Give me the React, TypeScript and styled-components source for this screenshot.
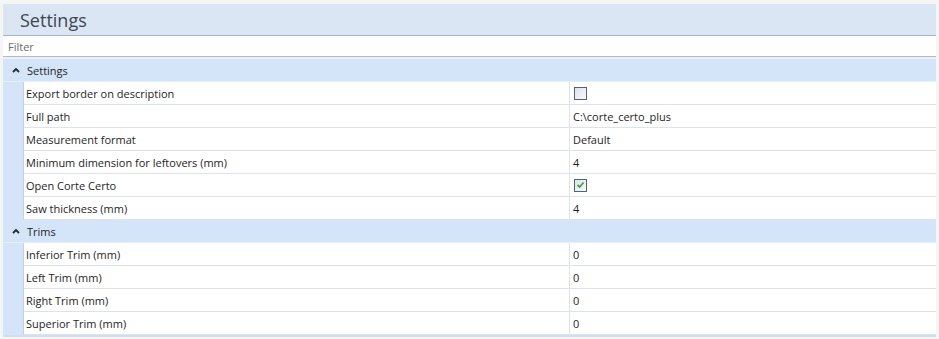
import { createGlobalStyle, styled } from 'styled-components';

const GlobalStyle = createGlobalStyle`
  body {
    margin: 0;
    background: #f5f5f3;
    font-family: "Open Sans", "Noto Sans", "DejaVu Sans", sans-serif;
  }
`;

const Panel = styled.section`
  width: 933px;
  margin: 4px 0 0 3px;
  display: flex;
  flex-direction: column;
  background: #ffffff;
`;

const TitleBar = styled.header`
  height: 31px;
  display: flex;
  align-items: center;
  padding-left: 17px;
  background: #dbe6f4;
  border-bottom: 1px solid #a4b5c7;
  font-size: 18px;
  color: #3e4650;
`;

const FilterInput = styled.input`
  height: 20px;
  border: none;
  border-bottom: 1px solid #b2bac9;
  padding: 0 0 0 5px;
  margin: 0;
  font-family: inherit;
  font-size: 11px;
  color: #333;
  background: #fdfefd;
  outline: none;
  &::placeholder {
    color: #6d6d6d;
  }
`;

const Spacer = styled.div`
  height: 2px;
  background: #e9f1fb;
`;

const GroupHeader = styled.div`
  height: 22px;
  display: flex;
  align-items: center;
  gap: 7px;
  padding-left: 9px;
  background: #d4e5f9;
  border-bottom: 1px solid #e6eef8;
  font-size: 11px;
  color: #1e1e1e;
`;

const Rows = styled.div`
  display: grid;
  grid-template-columns: 21px 545px 1fr;
`;

const Gutter = styled.div`
  background: #d4e5f9;
  border-right: 1px solid #c2d2e6;
`;

const Cell = styled.div<{ $value?: boolean }>`
  height: 22px;
  display: flex;
  align-items: center;
  padding-left: ${(p) => (p.$value ? '3px' : '2px')};
  border-bottom: 1px solid #dde3ea;
  border-left: ${(p) => (p.$value ? '1px solid #dde3ea' : 'none')};
  font-size: 11px;
  color: #1e1e1e;
  white-space: nowrap;
`;

const Box = styled.span`
  width: 11px;
  height: 11px;
  margin-left: 1px;
  border: 1px solid #4f6478;
  background: linear-gradient(135deg, #dfe4ea, #f7f9fb);
  display: inline-flex;
  align-items: center;
  justify-content: center;
`;

const BottomLine = styled.div`
  height: 2px;
  background: #cfdff1;
`;

type Value = string | boolean;

const Chevron = () => (
  <svg width="8" height="6" viewBox="0 0 8 6">
    <path d="M1 5 L4 2 L7 5" fill="none" stroke="#1e2a3a" strokeWidth="1.8" />
  </svg>
);

const Check = ({ on }: { on: boolean }) => (
  <Box>
    {on && (
      <svg width="9" height="8" viewBox="0 0 9 8">
        <path d="M1.5 4 L3.6 6 L7.5 1.5" fill="none" stroke="#3fa63a" strokeWidth="1.8" />
      </svg>
    )}
  </Box>
);

function Group({ title, items }: { title: string; items: [string, Value][] }) {
  return (
    <>
      <GroupHeader>
        <Chevron />
        {title}
      </GroupHeader>
      <Rows>
        {items.map(([label, value]) => (
          <Row key={label} label={label} value={value} />
        ))}
      </Rows>
    </>
  );
}

function Row({ label, value }: { label: string; value: Value }) {
  return (
    <>
      <Gutter />
      <Cell>{label}</Cell>
      <Cell $value>{typeof value === 'boolean' ? <Check on={value} /> : value}</Cell>
    </>
  );
}

const settings: [string, Value][] = [
  ['Export border on description', false],
  ['Full path', 'C:\\corte_certo_plus'],
  ['Measurement format', 'Default'],
  ['Minimum dimension for leftovers (mm)', '4'],
  ['Open Corte Certo', true],
  ['Saw thickness (mm)', '4'],
];

const trims: [string, Value][] = [
  ['Inferior Trim (mm)', '0'],
  ['Left Trim (mm)', '0'],
  ['Right Trim (mm)', '0'],
  ['Superior Trim (mm)', '0'],
];

export default function App() {
  return (
    <>
      <GlobalStyle />
      <Panel>
        <TitleBar>Settings</TitleBar>
        <FilterInput placeholder="Filter" />
        <Spacer />
        <Group title="Settings" items={settings} />
        <Group title="Trims" items={trims} />
        <BottomLine />
      </Panel>
    </>
  );
}
